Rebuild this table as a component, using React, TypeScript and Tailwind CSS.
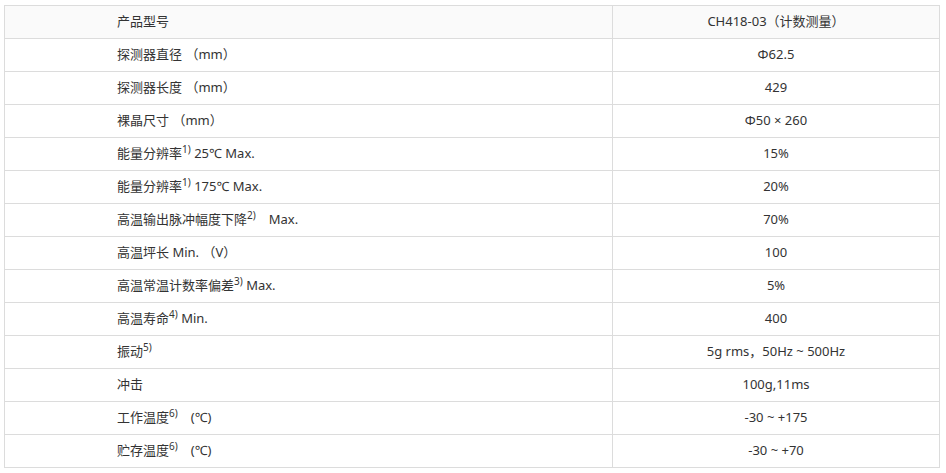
const rows: [React.ReactNode, string][] = [
  ["探测器直径 （mm）", "Φ62.5"],
  ["探测器长度 （mm）", "429"],
  ["裸晶尺寸 （mm）", "Φ50 × 260"],
  [<>能量分辨率<Sup>1)</Sup> 25℃ Max.</>, "15%"],
  [<>能量分辨率<Sup>1)</Sup> 175℃ Max.</>, "20%"],
  [<>高温输出脉冲幅度下降<Sup>2)</Sup>　Max.</>, "70%"],
  ["高温坪长 Min. （V）", "100"],
  [<>高温常温计数率偏差<Sup>3)</Sup> Max.</>, "5%"],
  [<>高温寿命<Sup>4)</Sup> Min.</>, "400"],
  [<>振动<Sup>5)</Sup></>, "5g rms，50Hz ~ 500Hz"],
  ["冲击", "100g,11ms"],
  [<>工作温度<Sup>6)</Sup>　(℃)</>, "-30 ~ +175"],
  [<>贮存温度<Sup>6)</Sup>　(℃)</>, "-30 ~ +70"],
];

function Sup({ children }: { children: React.ReactNode }) {
  return <sup className="text-[10px] -top-[5px]">{children}</sup>;
}

export default function App() {
  return (
    <div
      className="w-[946px] h-[473px] bg-white pt-[5px] pl-[4px]"
      style={{ fontFamily: '"Noto Sans", "Noto Sans CJK SC", sans-serif' }}
    >
      <table className="w-[936px] border-collapse text-[13px] text-[#333]">
        <tbody>
          <tr className="h-[33px] bg-[#fafafa]">
            <td className="w-[608px] border border-[#dcdcdc] pl-[112px] text-left">产品型号</td>
            <td className="border border-[#dcdcdc] text-center">CH418-03（计数测量）</td>
          </tr>
          {rows.map(([label, value], i) => (
            <tr key={i} className="h-[33px]">
              <td className="border border-[#dcdcdc] pl-[112px] text-left">{label}</td>
              <td className="border border-[#dcdcdc] text-center">{value}</td>
            </tr>
          ))}
        </tbody>
      </table>
    </div>
  );
}
